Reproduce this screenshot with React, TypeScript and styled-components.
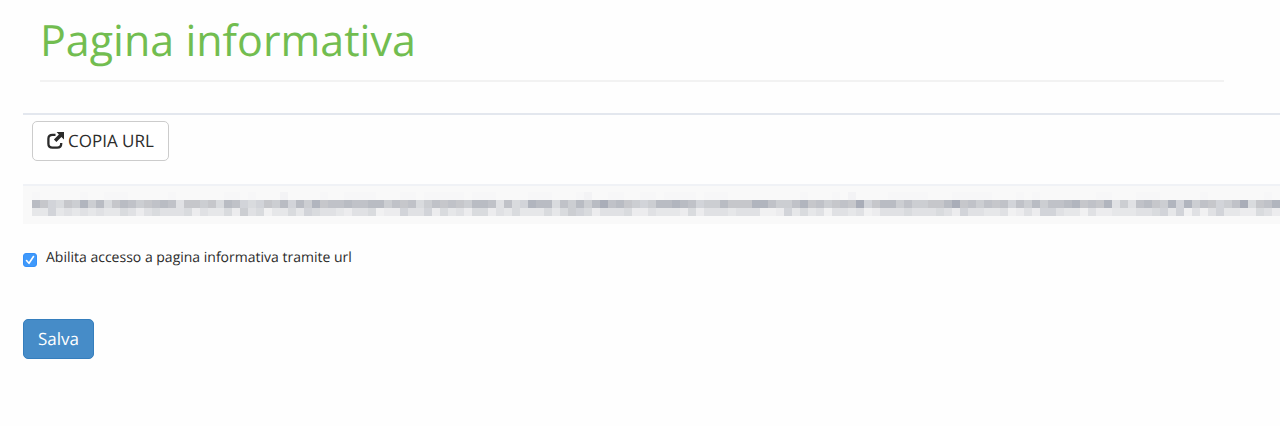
import React from "react";
import styled, { createGlobalStyle } from "styled-components";

const GlobalStyle = createGlobalStyle`
  * { box-sizing: border-box; }
  body {
    margin: 0;
    background: #fefefe;
    color: #2b2b2b;
    font-family: "Open Sans", "Noto Sans", sans-serif;
    font-size: 14px;
    line-height: 20px;
    text-rendering: geometricPrecision;
  }
`;

const Page = styled.main`
  overflow: hidden;
`;

const Header = styled.header`
  margin: 0 56px 31px 40px;
  padding: 9px 0;
  border-bottom: 2px solid #f2f2f2;
`;

const Title = styled.h1`
  margin: 0;
  color: #72bd50;
  font-size: 43px;
  font-weight: 400;
  line-height: 62px;
`;

const Form = styled.form`
  display: flex;
  flex-direction: column;
  align-items: flex-start;
  margin-left: 23px;
`;

const Toolbar = styled.div`
  align-self: stretch;
  padding: 6px 9px 23px;
  border-top: 2px solid #e3e7ee;
`;

const Button = styled.button<{ $primary?: boolean }>`
  display: inline-flex;
  align-items: center;
  gap: 4px;
  height: 40px;
  padding: 0 14px;
  border: 1px solid ${(p) => (p.$primary ? "#357ebd" : "#cccccc")};
  border-radius: 5px;
  background: ${(p) => (p.$primary ? "#468cc8" : "#ffffff")};
  color: ${(p) => (p.$primary ? "#ffffff" : "#2b2b2b")};
  font-family: inherit;
  font-size: 17px;
  line-height: 24px;
  text-rendering: inherit;
  white-space: nowrap;
  cursor: pointer;
`;

const UrlBox = styled.div`
  align-self: stretch;
  height: 40px;
  margin-bottom: 24px;
  padding: 6px 0 0 9px;
  border-top: 2px solid #f0f2f6;
  background: #f9f9f9;
  overflow: hidden;

  svg { display: block; }
`;

const CheckLabel = styled.label`
  display: flex;
  align-items: center;
  gap: 9px;
  margin-bottom: 51px;
  cursor: pointer;
`;

const CheckWrap = styled.span`
  position: relative;
  display: block;
  width: 14px;
  height: 14px;
  margin-top: 4px;

  svg {
    position: absolute;
    inset: 0;
    pointer-events: none;
    visibility: hidden;
  }
  input:checked + svg { visibility: visible; }
`;

const Checkbox = styled.input`
  appearance: none;
  display: block;
  width: 14px;
  height: 14px;
  margin: 0;
  border: 1px solid #b5b5b5;
  border-radius: 3px;
  background: #ffffff;

  &:checked {
    border-color: #3590f8;
    background: #3f99fb;
  }
`;

const CELL = 8;

const SHADES: Record<string, string> = {
  "0": "#a9adb8", "1": "#b1b5be", "2": "#b9bcc3", "3": "#c0c2c8",
  "4": "#c6c7cb", "5": "#ccced2", "6": "#d2d4d9", "7": "#d9dbde",
  "8": "#e0e1e4", "9": "#e6e7e9", a: "#ececee", b: "#f1f1f2",
  c: "#f3f3f5", d: "#f7f7f8",
};

// One character per masked cell, from left to right.
const MASK_ROWS = [
  "d.....d..ddd.....d......dd.d...c....d." +
    ".dddd...dd.ddddd.ddd....ddd...dc..dd..dd" +
    ".dddd.ddd.........d...d.c....ddddd...ddd" +
    "dd...d.d.......dd...ddd.....d.......d.",
  "24674515274235432384454723676452625143" +
    "3233225343753434522383761227352520324565" +
    "2212365524441135531435434064225355442043" +
    "53436352533214341858324516153465307431",
  "9969898989978a878887a8997a587b99796788" +
    "9a887baa6886a798a77a8979997975" + "67a8887aa8" +
    "999a7a8889888bba69798b8898ba888788878a68" +
    "8998ba8a66899b8aa999887696b8b8699aa78a",
];

const MaskedUrl = () => (
  <svg
    width={MASK_ROWS[1].length * CELL}
    height={MASK_ROWS.length * CELL}
    shapeRendering="crispEdges"
    role="img"
    aria-label="URL"
  >
    {MASK_ROWS.flatMap((row, y) =>
      [...row].map((shade, x) =>
        SHADES[shade] ? (
          <rect
            key={`${x}-${y}`}
            x={x * CELL}
            y={y * CELL}
            width={CELL}
            height={CELL}
            fill={SHADES[shade]}
          />
        ) : null,
      ),
    )}
  </svg>
);

const ShareIcon = () => (
  <svg width="17" height="18" viewBox="0 0 17 18" aria-hidden="true">
    <path
      d="M8.5 2.9H5.4Q1.4 2.9 1.4 6.8V11.8Q1.4 15.7 5.4 15.7H10.2Q14.2 15.7 14.2 11.8V11"
      fill="none"
      stroke="#2b2b2b"
      strokeWidth="2.3"
    />
    <path d="M9.6 0H17V7.6L14.4 5.1L9.4 10.1L6.9 7.6L11.9 2.6Z" fill="#2b2b2b" />
  </svg>
);

export default function App() {
  return (
    <>
      <GlobalStyle />
      <Page>
        <Header>
          <Title>Pagina informativa</Title>
        </Header>
        <Form onSubmit={(e) => e.preventDefault()}>
          <Toolbar>
            <Button type="button">
              <ShareIcon />
              COPIA URL
            </Button>
          </Toolbar>
          <UrlBox>
            <MaskedUrl />
          </UrlBox>
          <CheckLabel>
            <CheckWrap>
              <Checkbox type="checkbox" defaultChecked />
              <svg width="14" height="14" viewBox="0 0 14 14" aria-hidden="true">
                <path
                  d="M3.5 7.5L6 10.3L10.5 3.5"
                  fill="none"
                  stroke="#ffffff"
                  strokeWidth="1.6"
                  strokeLinecap="round"
                  strokeLinejoin="round"
                />
              </svg>
            </CheckWrap>
            Abilita accesso a pagina informativa tramite url
          </CheckLabel>
          <Button type="submit" $primary>
            Salva
          </Button>
        </Form>
      </Page>
    </>
  );
}
